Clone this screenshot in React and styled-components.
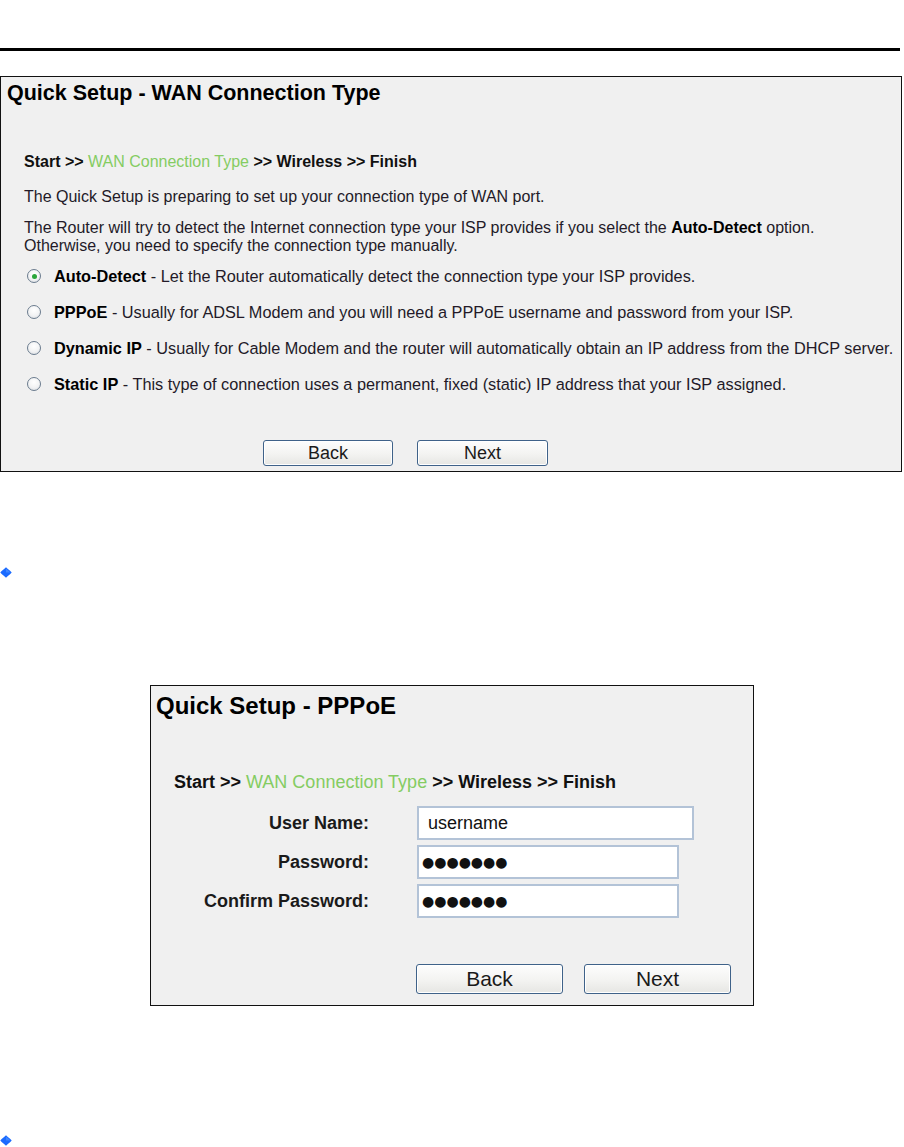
import React from "react";
import styled, { createGlobalStyle } from "styled-components";

const Global = createGlobalStyle`
  html, body { margin: 0; padding: 0; background: #ffffff; }
  body { font-family: "Liberation Sans", Arial, sans-serif; color: #1b1b1b; }
`;

const Page = styled.div`
  display: flex;
  flex-direction: column;
  width: 904px;
  height: 1147px;
  overflow: hidden;
`;

const TopRule = styled.div`
  margin-top: 48px;
  width: 900px;
  height: 3px;
  background: #000;
`;

const Panel = styled.section`
  box-sizing: border-box;
  width: ${(p) => p.$w}px;
  margin-top: ${(p) => p.$top}px;
  margin-left: ${(p) => p.$left || 0}px;
  background: #f0f0f0;
  border: 1px solid #111;
  padding: ${(p) => p.$pad};
  display: flex;
  flex-direction: column;
`;

const Title = styled.h1`
  margin: 0;
  padding-left: ${(p) => p.$indent}px;
  font-size: ${(p) => p.$size}px;
  line-height: ${(p) => p.$lh}px;
  font-weight: bold;
  color: #000;
  white-space: nowrap;
`;

const Body = styled.div`
  display: flex;
  flex-direction: column;
  padding-left: ${(p) => p.$indent}px;
`;

const Crumbs = styled.div`
  margin-top: ${(p) => p.$mt}px;
  font-size: ${(p) => p.$size}px;
  line-height: ${(p) => p.$lh}px;
  font-weight: bold;
  color: #111;
  white-space: nowrap;
`;

const Current = styled.span`
  font-weight: normal;
  color: #84cc62;
`;

const Para = styled.p`
  margin: ${(p) => p.$mt}px 0 0 0;
  font-size: 16px;
  line-height: 18px;
  color: #231a28;
  white-space: nowrap;
`;

const Options = styled.div`
  margin-top: 12px;
  display: flex;
  flex-direction: column;
  gap: 18px;
`;

const Option = styled.label`
  display: flex;
  align-items: center;
  height: 18px;
  font-size: 16.3px;
  line-height: 18px;
  color: #231a28;
  white-space: nowrap;
`;

const Radio = styled.span`
  box-sizing: border-box;
  width: 14px;
  height: 14px;
  margin-left: 3px;
  margin-right: 13px;
  border-radius: 50%;
  border: 1px solid #6b7c8e;
  background: radial-gradient(circle at 50% 35%, #ffffff 0%, #f2f3f4 55%, #d5d9de 100%);
  display: flex;
  align-items: center;
  justify-content: center;
  flex-shrink: 0;
  &::after {
    content: "";
    width: 5px;
    height: 5px;
    border-radius: 50%;
    background: ${(p) => (p.$on ? "#2aa63a" : "transparent")};
  }
`;

const Strong = styled.b`
  color: #000;
`;

const Buttons = styled.div`
  display: flex;
  gap: ${(p) => p.$gap}px;
  margin-top: ${(p) => p.$mt}px;
  margin-left: ${(p) => p.$ml}px;
`;

const Button = styled.button`
  box-sizing: border-box;
  width: ${(p) => p.$w}px;
  height: ${(p) => p.$h}px;
  padding: 0;
  border: 1px solid #3f6289;
  border-radius: 3px;
  background: linear-gradient(#fdfdfd, #f3f3f1 55%, #e6e6e3);
  font-family: "Liberation Sans", Arial, sans-serif;
  font-size: ${(p) => p.$fs}px;
  color: #1a1a1a;
  box-shadow: inset 0 0 0 1px #ffffff;
`;

const Bullet = styled.svg`
  display: block;
  margin-top: ${(p) => p.$mt}px;
  flex-shrink: 0;
`;

const Form = styled.div`
  display: grid;
  grid-template-columns: 218px auto;
  column-gap: 48px;
  row-gap: 5px;
  margin-top: 13px;
  align-items: center;
`;

const Label = styled.span`
  text-align: right;
  font-size: 18px;
  font-weight: bold;
  color: #1a1a1a;
  white-space: nowrap;
`;

const Field = styled.input`
  box-sizing: border-box;
  width: ${(p) => p.$w}px;
  height: 34px;
  margin: 0;
  border: 2px solid #b3c3d7;
  background: #fff;
  outline: none;
  padding: 0 0 0 ${(p) => (p.$dots ? 3 : 9)}px;
  font-family: ${(p) =>
    p.$dots ? '"DejaVu Sans", sans-serif' : '"Liberation Sans", Arial, sans-serif'};
  font-size: ${(p) => (p.$dots ? 14 : 18)}px;
  color: #111;
`;

const Diamond = ({ mt }) => (
  <Bullet $mt={mt} width="12" height="11" viewBox="0 0 12 11">
    <path
      d="M6 0.3 C7.6 1.8 10 3.4 11.7 5.5 C10 7.6 7.6 9.2 6 10.7 C4.4 9.2 2 7.6 0.3 5.5 C2 3.4 4.4 1.8 6 0.3 Z"
      fill="#1b6bff"
    />
    <path d="M6 1.6 C7.2 2.8 9 4 10.2 5.5 L6 5.5 Z" fill="#3f86ff" />
  </Bullet>
);

const Crumb = ({ mt, size, lh }) => (
  <Crumbs $mt={mt} $size={size} $lh={lh}>
    Start &gt;&gt; <Current>WAN Connection Type</Current> &gt;&gt; Wireless &gt;&gt; Finish
  </Crumbs>
);

const options = [
  { on: true, name: "Auto-Detect", text: "Let the Router automatically detect the connection type your ISP provides." },
  { name: "PPPoE", text: "Usually for ADSL Modem and you will need a PPPoE username and password from your ISP." },
  { name: "Dynamic IP", text: "Usually for Cable Modem and the router will automatically obtain an IP address from the DHCP server." },
  { name: "Static IP", text: "This type of connection uses a permanent, fixed (static) IP address that your ISP assigned." },
];

export default function App() {
  return (
    <Page>
      <Global />
      <TopRule />
      <Panel $w={902} $top={25} $pad="4px 0 5px 0">
        <Title $indent={6} $size={21.5} $lh={24}>Quick Setup - WAN Connection Type</Title>
        <Body $indent={23}>
          <Crumb mt={48} size={16} lh={18} />
          <Para $mt={17}>The Quick Setup is preparing to set up your connection type of WAN port.</Para>
          <Para $mt={13}>
            The Router will try to detect the Internet connection type your ISP provides if you select the{" "}
            <Strong>Auto-Detect</Strong> option.
            <br />
            Otherwise, you need to specify the connection type manually.
          </Para>
          <Options>
            {options.map((o) => (
              <Option key={o.name}>
                <Radio $on={o.on} />
                <Strong>{o.name}</Strong>&nbsp;- {o.text}
              </Option>
            ))}
          </Options>
          <Buttons $gap={24} $mt={47} $ml={239}>
            <Button $w={130} $h={26} $fs={18}>Back</Button>
            <Button $w={131} $h={26} $fs={18}>Next</Button>
          </Buttons>
        </Body>
      </Panel>
      <Diamond mt={95} />
      <Panel $w={604} $top={107} $left={150} $pad="6px 0 11px 0">
        <Title $indent={5} $size={24} $lh={28}>Quick Setup - PPPoE</Title>
        <Body $indent={23}>
          <Crumb mt={52} size={18} lh={21} />
        </Body>
        <Form>
          <Label>User Name:</Label>
          <Field $w={277} readOnly value="username" />
          <Label>Password:</Label>
          <Field $w={262} $dots readOnly value="●●●●●●●" />
          <Label>Confirm Password:</Label>
          <Field $w={262} $dots readOnly value="●●●●●●●" />
        </Form>
        <Buttons $gap={21} $mt={46} $ml={265}>
          <Button $w={147} $h={30} $fs={21}>Back</Button>
          <Button $w={147} $h={30} $fs={21}>Next</Button>
        </Buttons>
      </Panel>
      <Diamond mt={129} />
    </Page>
  );
}
